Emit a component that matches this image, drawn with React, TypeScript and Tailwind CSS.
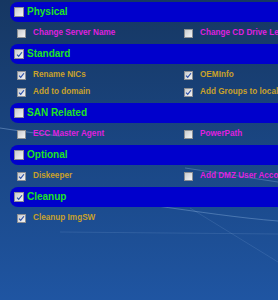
import React from 'react';

type Item = { label: string; checked: boolean };
type Group = { title: string; checked: boolean; items: Item[] };

const groups: Group[] = [
  {
    title: 'Physical',
    checked: false,
    items: [
      { label: 'Change Server Name', checked: false },
      { label: 'Change CD Drive Letter', checked: false },
    ],
  },
  {
    title: 'Standard',
    checked: true,
    items: [
      { label: 'Rename NICs', checked: true },
      { label: 'OEMInfo', checked: true },
      { label: 'Add to domain', checked: true },
      { label: 'Add Groups to local Admins', checked: true },
    ],
  },
  {
    title: 'SAN Related',
    checked: false,
    items: [
      { label: 'ECC Master Agent', checked: false },
      { label: 'PowerPath', checked: false },
    ],
  },
  {
    title: 'Optional',
    checked: false,
    items: [
      { label: 'Diskeeper', checked: true },
      { label: 'Add DMZ User Account', checked: false },
    ],
  },
  {
    title: 'Cleanup',
    checked: true,
    items: [{ label: 'Cleanup ImgSW', checked: true }],
  },
];

const Box: React.FC<{ checked: boolean; size?: string }> = ({ checked, size = 'w-[9px] h-[9px]' }) => (
  <div
    className={`${size} shrink-0 border border-[#8c8f94] bg-gradient-to-br from-[#c9ccd1] to-[#f4f4f4] flex items-center justify-center`}
  >
    {checked && (
      <svg viewBox="0 0 8 8" className="w-[7px] h-[7px]">
        <path d="M1.2 4.2 L3.1 6.2 L6.8 1.4" fill="none" stroke="#2a4fa8" strokeWidth="1.3" />
      </svg>
    )}
  </div>
);

const App: React.FC = () => {
  return (
    <div
      className="relative w-[278px] h-[300px] overflow-hidden bg-gradient-to-b from-[#163762] via-[#1a4683] to-[#1f55a2]"
      style={{ fontFamily: '"Liberation Sans", Arial, sans-serif' }}
    >
      {/* wallpaper streaks */}
      <svg className="absolute inset-0 w-full h-full pointer-events-none" viewBox="0 0 278 300">
        <path d="M0 128 C 20 131, 40 134, 60 136" stroke="#9fc3ec" strokeOpacity="0.4" strokeWidth="1" fill="none" />
        <path d="M150 205 C 200 212, 240 218, 278 221" stroke="#9fc3ec" strokeOpacity="0.35" strokeWidth="1" fill="none" />
        <path d="M60 232 L 278 234" stroke="#9fc3ec" strokeOpacity="0.15" strokeWidth="1" fill="none" />
        <path d="M190 208 L 278 262" stroke="#9fc3ec" strokeOpacity="0.15" strokeWidth="1" fill="none" />
        <path d="M185 168 L 278 182" stroke="#9fc3ec" strokeOpacity="0.3" strokeWidth="1" fill="none" />
      </svg>

      <div className="relative pt-[2px]">
        {groups.map((g) => (
          <div key={g.title}>
            <div className="ml-[10px] h-[20px] rounded-l-[8px] bg-[#0000cc] flex items-center pl-[4px] gap-[3px]">
              <Box checked={g.checked} size="w-[10px] h-[10px]" />
              <span className="text-[10px] font-bold text-[#1ee41e] leading-none">{g.title}</span>
            </div>
            <div className="grid grid-cols-[167px_1fr] pl-[17px] pt-[3px] pb-[2px]">
              {g.items.map((it) => (
                <div key={it.label} className="h-[17px] flex items-center gap-[7px] whitespace-nowrap overflow-hidden">
                  <Box checked={it.checked} />
                  <span
                    className={`text-[8.2px] font-bold leading-none ${
                      it.checked ? 'text-[#c9a12a]' : 'text-[#df1fdf]'
                    }`}
                  >
                    {it.label}
                  </span>
                </div>
              ))}
            </div>
          </div>
        ))}
      </div>
    </div>
  );
};

export default App;
